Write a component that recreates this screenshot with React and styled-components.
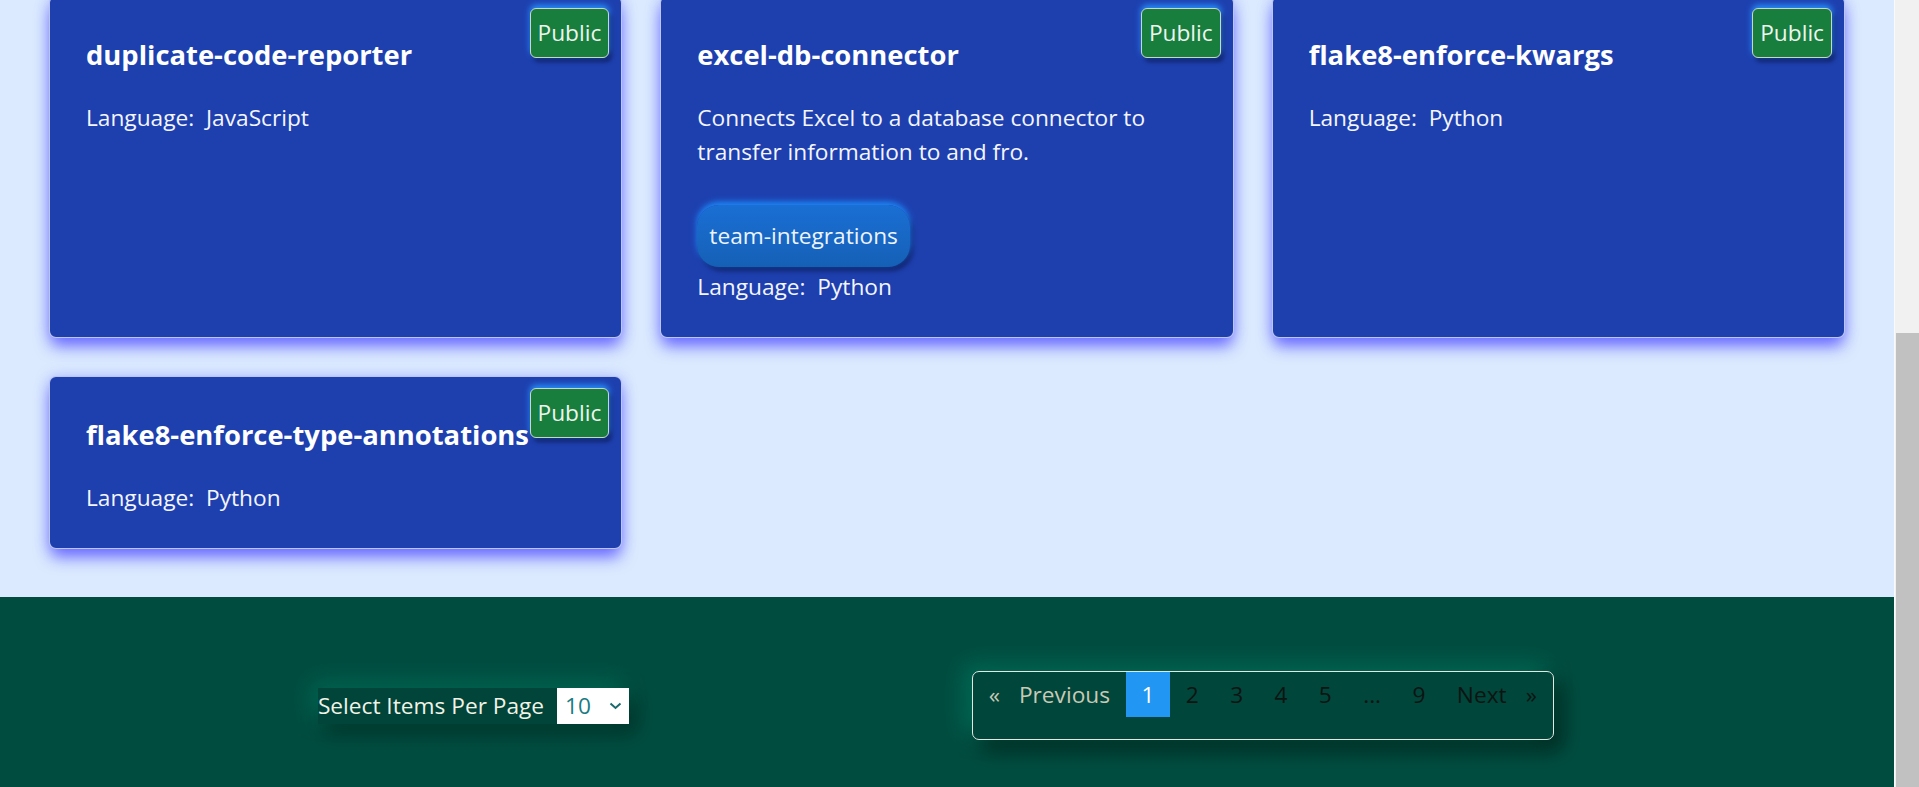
import React from 'react'
import styled, { createGlobalStyle } from 'styled-components'

const GlobalStyle = createGlobalStyle`
  html, body {
    margin: 0;
    padding: 0;
    height: 100%;
    overflow: hidden;
  }
  body {
    font-family: "Open Sans", "Noto Sans", sans-serif;
  }
`

const Screen = styled.div`
  display: flex;
  width: 100vw;
  height: 100vh;
`

// page is "scrolled" to the bottom: content overflows at the top
const Page = styled.main`
  flex: 1;
  min-width: 0;
  display: flex;
  flex-direction: column;
  justify-content: flex-end;
  overflow: hidden;
  background: #dbeafe;
`

const RepoGrid = styled.section`
  flex-shrink: 0;
  display: grid;
  grid-template-columns: repeat(3, 1fr);
  align-items: stretch;
  gap: 38px;
  padding: 40px 49px 48px;
`

const Card = styled.article`
  position: relative;
  padding: 40px 36px 33px;
  background: #1e40af;
  border: 1px solid rgba(215, 220, 255, 0.85);
  border-radius: 7px;
  box-shadow: 0 10px 16px -2px rgba(100, 100, 255, 0.95), 0 0 14px rgba(120, 130, 255, 0.4);
  color: #f4f6ff;
`

const Badge = styled.span`
  position: absolute;
  top: 11px;
  right: 12px;
  padding: 7px 7px;
  line-height: 34px;
  font-size: 22.7px;
  color: #eef5ee;
  background: #177e3d;
  border: 1px solid #c9d6cc;
  border-radius: 6px;
  box-shadow: 0 -3px 6px rgba(40, 150, 255, 0.95), 3px 4px 4px rgba(0, 0, 30, 0.45);
`

const Title = styled.h4`
  margin: 0 0 29px;
  font-size: 27.4px;
  font-weight: 700;
  line-height: 35px;
  color: #ffffff;
`

const Text = styled.p`
  margin: 0;
  font-size: 22.7px;
  line-height: 34px;
`

const TopicRow = styled.div`
  display: flex;
  gap: 10px;
  margin: 36px 0 3px;
`

const Topic = styled.span`
  padding: 14px 12px;
  font-size: 22.7px;
  line-height: 34px;
  color: #eef4ff;
  background: linear-gradient(180deg, #1a6fd4 0%, #1560b6 100%);
  border-radius: 22px;
  box-shadow: 0 -3px 6px rgba(30, 144, 255, 0.95), 3px 4px 5px rgba(0, 0, 30, 0.45);
`

const Footer = styled.footer`
  flex-shrink: 0;
  display: grid;
  grid-template-columns: 1fr 1fr;
  align-items: center;
  padding: 74px 0 47px;
  background: #004d40;
  font-size: 22.7px;
`

const PerPage = styled.div`
  justify-self: center;
  display: flex;
  align-items: center;
  height: 36px;
  background: #00443a;
  box-shadow: -6px -6px 22px rgba(0, 140, 110, 0.45), 6px 8px 20px rgba(0, 20, 15, 0.55);
`

const PerPageLabel = styled.span`
  margin-right: 13px;
  color: #f1f3e6;
  line-height: 36px;
`

const SelectWrap = styled.div`
  position: relative;
  display: flex;
`

const Select = styled.select`
  appearance: none;
  width: 72px;
  height: 36px;
  padding: 0 0 0 8px;
  border: none;
  border-radius: 0;
  background: #ffffff;
  color: #1b7b84;
  font-family: inherit;
  font-size: 22.7px;
  outline: none;
`

const Chevron = styled.svg`
  position: absolute;
  right: 7px;
  top: 14px;
  pointer-events: none;
`

const PagerCol = styled.div`
  padding-left: 25px;
`

const Pager = styled.ul`
  display: inline-flex;
  align-items: flex-start;
  margin: 0;
  padding: 0 0 22px;
  list-style: none;
  background: #00463a;
  border: 1px solid #e4e8e4;
  border-radius: 7px;
  box-shadow: -8px -6px 22px rgba(0, 140, 110, 0.5), 8px 10px 20px rgba(0, 15, 10, 0.6);
`

const PageItem = styled.li`
  display: flex;
  gap: 19px;
  padding: 0 15.7px;
  height: 45px;
  line-height: 45px;
  color: ${p => (p.$active ? '#ffffff' : p.$disabled ? '#c9c9b6' : '#0d1412')};
  background: ${p => (p.$active ? '#2196f3' : 'transparent')};
`

const ScrollTrack = styled.div`
  flex: 0 0 24px;
  display: flex;
  flex-direction: column;
  justify-content: flex-end;
  background: #f1f1f1;
  border-left: 1px solid #fafafa;
`

const ScrollThumb = styled.div`
  height: 454px;
  margin-left: 1px;
  background: #c1c1c1;
`

const pages = ['2', '3', '4', '5', '...', '9']

const repos = [
  { name: 'duplicate-code-reporter', language: 'JavaScript' },
  {
    name: 'excel-db-connector',
    description: 'Connects Excel to a database connector to transfer information to and fro.',
    topics: ['team-integrations'],
    language: 'Python',
  },
  { name: 'flake8-enforce-kwargs', language: 'Python' },
  { name: 'flake8-enforce-type-annotations', language: 'Python' },
]

const RepoCard = ({ repo }) => (
  <Card>
    <Badge>Public</Badge>
    <Title>{repo.name}</Title>
    {repo.description && <Text>{repo.description}</Text>}
    {repo.topics && (
      <TopicRow>
        {repo.topics.map(t => <Topic key={t}>{t}</Topic>)}
      </TopicRow>
    )}
    <Text>Language:&nbsp; {repo.language}</Text>
  </Card>
)

const App = () => {
  return (
    <>
      <GlobalStyle />
      <Screen>
        <Page>
          <RepoGrid>
            {repos.map(r => <RepoCard key={r.name} repo={r} />)}
          </RepoGrid>
          <Footer>
            <PerPage>
              <PerPageLabel>Select Items Per Page</PerPageLabel>
              <SelectWrap>
                <Select defaultValue="10">
                  <option value="10">10</option>
                  <option value="20">20</option>
                  <option value="50">50</option>
                </Select>
                <Chevron width="13" height="8" viewBox="0 0 13 8">
                  <path d="M1.5 1.5 L6.5 6 L11.5 1.5" fill="none" stroke="#1a6a6e" strokeWidth="2" />
                </Chevron>
              </SelectWrap>
            </PerPage>
            <PagerCol>
              <Pager>
                <PageItem $disabled><span>«</span><span>Previous</span></PageItem>
                <PageItem $active>1</PageItem>
                {pages.map(p => <PageItem key={p}>{p}</PageItem>)}
                <PageItem><span>Next</span><span>»</span></PageItem>
              </Pager>
            </PagerCol>
          </Footer>
        </Page>
        <ScrollTrack>
          <ScrollThumb />
        </ScrollTrack>
      </Screen>
    </>
  )
}

export default App
